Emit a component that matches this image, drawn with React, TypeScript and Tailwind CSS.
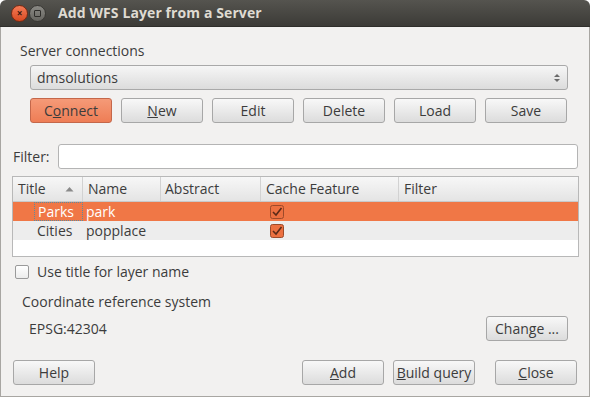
import React from "react";

function Btn({ children, className = "", orange = false }: { children: React.ReactNode; className?: string; orange?: boolean }) {
  return (
    <div
      className={
        "h-[25px] w-[82px] shrink-0 flex items-center justify-center rounded-[3px] border text-[14px] " +
        (orange
          ? "border-[#c4674a] bg-linear-to-b from-[#f59a78] to-[#ee7d55] text-[#3c3c3c]"
          : "border-[#a7a7a7] bg-linear-to-b from-[#f8f8f8] to-[#dcdcdc] text-[#3c3c3c]") +
        " " +
        className
      }
    >
      {children}
    </div>
  );
}

function OrangeCheck() {
  return (
    <svg width="14" height="14" viewBox="0 0 14 14">
      <rect x="0.5" y="0.5" width="13" height="13" rx="2" fill="#ec7040" stroke="#9c4a2a" />
      <path d="M3 7 L6 10 L11.5 3" fill="none" stroke="#5b2a18" strokeWidth="1.6" />
    </svg>
  );
}

export default function App() {
  return (
    <div className="w-[590px] h-[397px] bg-white font-['Open_Sans',sans-serif] text-[#3c3c3c] text-[14px] leading-none">
      <div className="w-[590px] h-[397px] flex flex-col rounded-t-[6px] overflow-hidden">
        {/* Title bar */}
        <div className="h-[27px] shrink-0 flex items-center bg-linear-to-b from-[#55544f] to-[#3c3b37] border-b border-[#2f2e2b]">
          <div className="ml-[11px] w-[17px] h-[17px] rounded-full bg-linear-to-b from-[#f47a55] to-[#d84a20] border border-[#7a2a12] flex items-center justify-center">
            <span className="text-[#3a1a10] text-[10px] font-bold leading-none">×</span>
          </div>
          <div className="ml-[1px] w-[17px] h-[17px] rounded-full bg-linear-to-b from-[#8b8a85] to-[#666560] border border-[#3a3935] flex items-center justify-center">
            <div className="w-[7px] h-[7px] border border-[#2e2d2a] rounded-[1px]" />
          </div>
          <div className="ml-[12px] text-[#dfdbd2] font-bold text-[14px] tracking-[0.1px]">Add WFS Layer from a Server</div>
        </div>

        {/* Body */}
        <div className="flex-1 bg-[#f2f1f0] border-x border-b border-[#a8a6a2] flex flex-col">
          <div className="ml-[19px] mt-[15px] h-[18px] flex items-center text-[14px]">Server connections</div>
          <div className="ml-[29px] mt-[5px] w-[538px] h-[25px] rounded-[3px] border border-[#a9a9a9] bg-linear-to-b from-[#f6f6f6] to-[#dcdcdc] flex items-center px-[6px] text-[14px]">
            <span className="flex-1">dmsolutions</span>
            <svg width="8" height="12" viewBox="0 0 8 12">
              <path d="M1 5 L4 2 L7 5 Z" fill="#6a6a6a" />
              <path d="M1 7 L4 10 L7 7 Z" fill="#6a6a6a" />
            </svg>
          </div>
          <div className="ml-[29px] mt-[8px] flex gap-[9px]">
            <Btn orange>C<span className="underline">o</span>nnect</Btn>
            <Btn><span className="underline">N</span>ew</Btn>
            <Btn>Edit</Btn>
            <Btn>Delete</Btn>
            <Btn>Load</Btn>
            <Btn>Save</Btn>
          </div>

          <div className="mt-[21px] flex items-center h-[25px]">
            <span className="ml-[12px] w-[45px] text-[14px]">Filter:</span>
            <div className="w-[520px] h-[25px] rounded-[3px] border border-[#b4b4b4] bg-white" />
          </div>

          {/* Table */}
          <div className="ml-[11px] mt-[7px] w-[567px] h-[81px] border border-[#b8b8b8] bg-white flex flex-col">
            <div className="h-[25px] flex bg-linear-to-b from-[#f7f7f7] to-[#e4e4e4] border-b border-[#c9c9c9] text-[14px]">
              <div className="w-[70px] flex items-center pl-[5px] border-r border-[#d2d2d2]">
                <span className="flex-1">Title</span>
                <svg width="9" height="6" viewBox="0 0 9 6" className="mr-[8px]"><path d="M0.5 5.5 L4.5 1 L8.5 5.5 Z" fill="#8a8a8a" /></svg>
              </div>
              <div className="w-[78px] flex items-center pl-[5px] border-r border-[#d2d2d2]">Name</div>
              <div className="w-[100px] flex items-center pl-[4px] border-r border-[#d2d2d2]">Abstract</div>
              <div className="w-[138px] flex items-center pl-[5px] border-r border-[#d2d2d2]">Cache Feature</div>
              <div className="flex-1 flex items-center pl-[5px]">Filter</div>
            </div>
            <div className="h-[19px] flex bg-[#f07746] text-white text-[14px]">
              <div className="w-[70px] flex items-center">
                <div className="ml-[21px] h-full flex-1 flex items-center pl-[3px] border border-dotted border-[#5c8aa0]">Parks</div>
              </div>
              <div className="w-[78px] flex items-center pl-[3px]">park</div>
              <div className="w-[100px]" />
              <div className="w-[138px] flex items-center pl-[9px]"><OrangeCheck /></div>
            </div>
            <div className="h-[19px] flex bg-[#ededed] text-[14px]">
              <div className="w-[70px] flex items-center pl-[24px]">Cities</div>
              <div className="w-[78px] flex items-center pl-[3px]">popplace</div>
              <div className="w-[100px]" />
              <div className="w-[138px] flex items-center pl-[9px]"><OrangeCheck /></div>
            </div>
          </div>

          <div className="mt-[7px] ml-[14px] flex items-center h-[15px]">
            <div className="w-[14px] h-[14px] rounded-[2px] border border-[#9a9a9a] bg-linear-to-b from-white to-[#ececec]" />
            <span className="ml-[8px] text-[14px]">Use title for layer name</span>
          </div>

          <div className="mt-[15px] ml-[21px] h-[15px] flex items-center text-[14px]">Coordinate reference system</div>

          <div className="mt-[7px] flex items-center h-[25px]">
            <span className="ml-[28px] flex-1 text-[14px]">EPSG:42304</span>
            <Btn className="mr-[21px]">Change ...</Btn>
          </div>

          <div className="mt-[19px] flex items-center">
            <Btn className="ml-[12px]">Help</Btn>
            <div className="flex-1" />
            <Btn><span className="underline">A</span>dd</Btn>
            <Btn className="ml-[9px]"><span className="underline">B</span>uild query</Btn>
            <Btn className="ml-[20px] mr-[12px]"><span className="underline">C</span>lose</Btn>
          </div>
        </div>
      </div>
    </div>
  );
}
